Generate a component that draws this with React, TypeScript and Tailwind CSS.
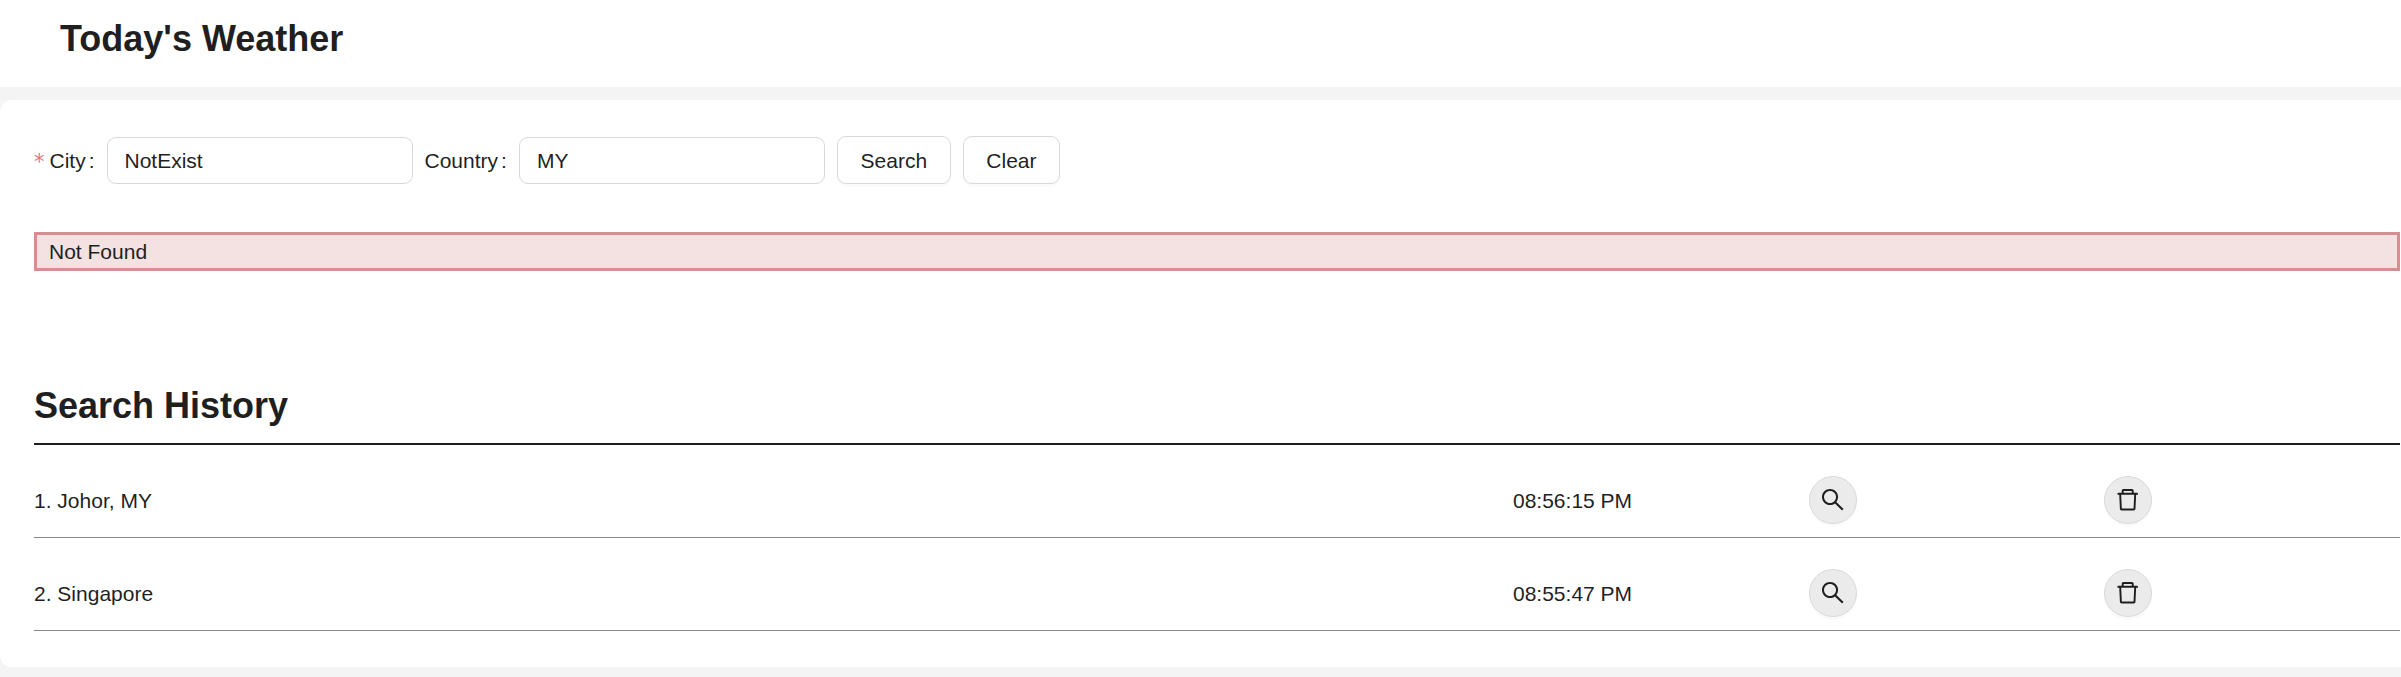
import { AiOutlineDelete, AiOutlineSearch } from "react-icons/ai";

const history = [
  { label: "1. Johor, MY", time: "08:56:15 PM" },
  { label: "2. Singapore", time: "08:55:47 PM" },
];

const roundButton =
  "flex size-12 items-center justify-center rounded-full border border-[#d9d9d9] bg-[#ebebeb] text-[27.4px] shadow-[0_3px_0_rgba(0,0,0,0.02)]";
const field =
  "h-[47px] w-[306px] rounded-[9px] border border-[#d9d9d9] bg-white px-[17px] outline-none";
const button =
  "h-12 rounded-[9px] border border-[#d9d9d9] bg-white shadow-[0_3px_0_rgba(0,0,0,0.02)]";

export default function App() {
  return (
    <div className="h-[677px] overflow-hidden bg-[#f4f4f4] font-['Liberation_Sans',sans-serif] text-[21px] leading-[33px] text-[#1f1f1f]">
      <header className="h-[87px] bg-white pt-[15px] pl-[60px]">
        <h1 className="text-4xl leading-[48px] font-bold">Today's Weather</h1>
      </header>
      <main className="mt-[13px] h-[567px] rounded-l-xl bg-white pr-px pl-[34px]">
        <form className="flex h-[84px] items-end" onSubmit={(e) => e.preventDefault()}>
          <label className="flex h-12 items-center pr-[12px]">
            <span className="mr-[5px] pt-[4px] font-['DejaVu_Sans',sans-serif] text-[#e8737a]">*</span>
            City<span className="ml-[3px]">:</span>
          </label>
          <input className={field} defaultValue="NotExist" />
          <label className="ml-[12px] flex h-12 items-center pr-[12px]">
            Country<span className="ml-[3px]">:</span>
          </label>
          <input className={field} defaultValue="MY" />
          <button className={`${button} ml-3 w-[114px]`}>Search</button>
          <button className={`${button} ml-3 w-[97px]`}>Clear</button>
        </form>
        <div className="mt-12 h-[39px] border-[3px] border-[#d58e92] bg-[#f4e1e1] pl-3">Not Found</div>
        <h2 className="mt-[111px] h-[63px] border-b-2 border-[#1f1f1f] text-4xl leading-[48px] font-bold">
          Search History
        </h2>
        <ul>
          {history.map((item) => (
            <li
              key={item.label}
              className="grid h-[93px] grid-cols-[1479px_296px_295px_1fr] border-b border-[#888888] pt-[31px]"
            >
              <span className="flex h-12 items-center">{item.label}</span>
              <span className="flex h-12 items-center">{item.time}</span>
              <button className={roundButton} aria-label="Search again">
                <AiOutlineSearch />
              </button>
              <button className={roundButton} aria-label="Delete">
                <AiOutlineDelete />
              </button>
            </li>
          ))}
        </ul>
      </main>
    </div>
  );
}
